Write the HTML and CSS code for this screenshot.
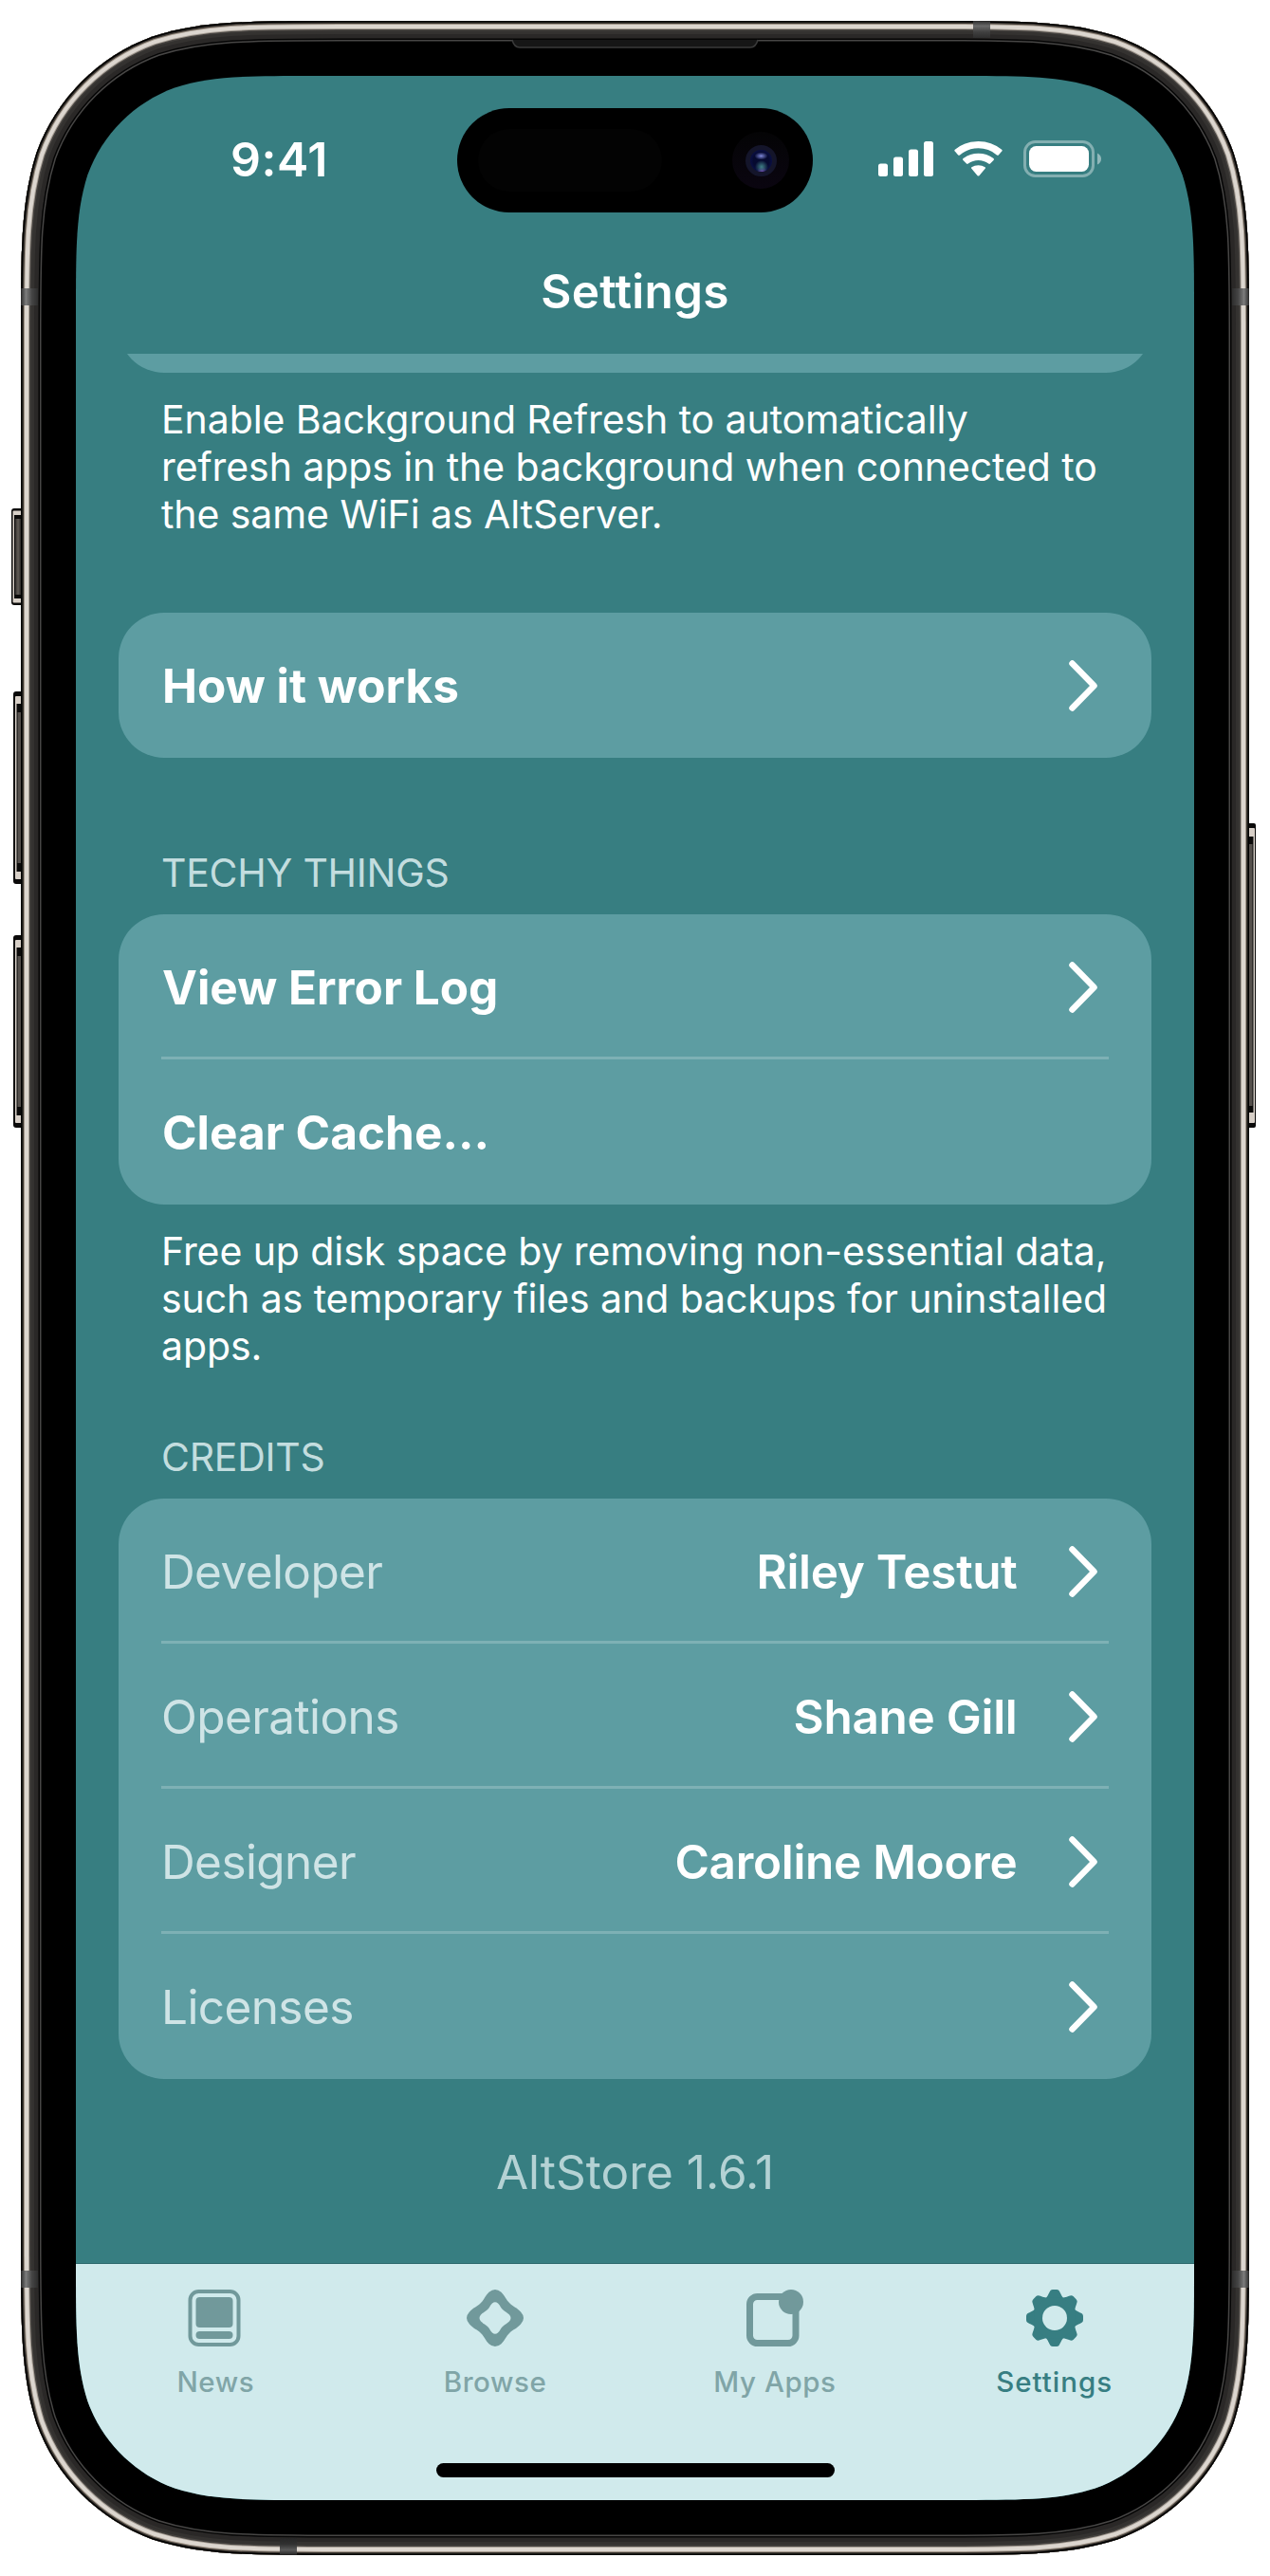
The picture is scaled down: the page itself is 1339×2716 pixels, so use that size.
FILE: index.html
```html
<!DOCTYPE html>
<html lang="en">
<head>
<meta charset="utf-8">
<title>Settings</title>
<link rel="stylesheet" href="styles.css">
</head>
<body>
<main class="device">
  <svg class="frame" viewBox="0 0 1339 2716" aria-hidden="true">
    <defs>
      <path id="body" d="M358.300 22H980.700C1077.500 22 1126 22 1178.100 38.500C1235 59.200 1279.800 104 1300.500 160.900C1317 213 1317 261.500 1317 358.300V2357.700C1317 2454.500 1317 2503 1300.500 2555.100C1279.800 2612 1235 2656.800 1178.100 2677.500C1126 2694 1077.500 2694 980.700 2694H358.300C261.500 2694 213 2694 160.900 2677.500C104 2656.800 59.200 2612 38.500 2555.100C22 2503 22 2454.500 22 2357.700V358.300C22 261.500 22 213 38.500 160.900C59.200 104 104 59.200 160.900 38.500C213 22 261.500 22 358.300 22Z"/>
      <clipPath id="bodyClip"><use href="#body"/></clipPath>
      <linearGradient id="key" x1="0" x2="1" y1="0" y2="0"><stop offset="0" stop-color="#2e2b29"/><stop offset=".5" stop-color="#625d58"/><stop offset="1" stop-color="#2e2b29"/></linearGradient>
      <linearGradient id="bandL" x1="0" x2="1" y1="0" y2="0"><stop offset="0" stop-color="#2a2a2a"/><stop offset=".3" stop-color="#7c7c7c"/><stop offset=".65" stop-color="#444"/><stop offset="1" stop-color="#2e2e2e"/></linearGradient>
      <linearGradient id="bandR" x1="1" x2="0" y1="0" y2="0"><stop offset="0" stop-color="#2a2a2a"/><stop offset=".3" stop-color="#7c7c7c"/><stop offset=".65" stop-color="#444"/><stop offset="1" stop-color="#2e2e2e"/></linearGradient>
      <linearGradient id="bandT" x1="0" x2="0" y1="0" y2="1"><stop offset="0" stop-color="#2a2a2a"/><stop offset=".3" stop-color="#6a6a6a"/><stop offset=".65" stop-color="#404040"/><stop offset="1" stop-color="#2e2e2e"/></linearGradient>
      <linearGradient id="bandB" x1="0" x2="0" y1="1" y2="0"><stop offset="0" stop-color="#222"/><stop offset=".3" stop-color="#5a5a5a"/><stop offset=".65" stop-color="#303030"/><stop offset="1" stop-color="#262626"/></linearGradient>
    </defs>
    <!-- side keys -->
    <g>
      <rect x="12" y="536" width="16" height="102" rx="3" fill="#0b0a0a"/>
      <rect x="13.500" y="538.500" width="12" height="97" rx="1" fill="#d8d0c8"/>
      <rect x="15" y="543" width="11" height="88" fill="#0b0a0a"/>
      <rect x="16" y="547" width="6" height="80" fill="url(#key)"/>
    </g>
    <g>
      <rect x="14" y="729" width="14" height="203" rx="3" fill="#0b0a0a"/>
      <rect x="16" y="734" width="8" height="193" rx="1" fill="#d8d0c8"/>
      <rect x="17.500" y="742" width="9" height="177" fill="#0b0a0a"/>
      <rect x="18.500" y="751" width="4" height="159" fill="#55504c"/>
    </g>
    <g>
      <rect x="14" y="986" width="14" height="203" rx="3" fill="#0b0a0a"/>
      <rect x="16" y="991" width="8" height="193" rx="1" fill="#d8d0c8"/>
      <rect x="17.500" y="999" width="9" height="177" fill="#0b0a0a"/>
      <rect x="18.500" y="1008" width="4" height="159" fill="#55504c"/>
    </g>
    <g>
      <rect x="1310" y="868" width="14" height="321" rx="2" fill="#0b0a0a"/>
      <rect x="1315" y="873" width="8" height="311" rx="1" fill="#d8d0c8"/>
      <rect x="1313" y="882" width="8.500" height="291" fill="#0b0a0a"/>
      <rect x="1317" y="890" width="3.500" height="276" fill="#55504c"/>
    </g>
    <!-- metal rim, drawn as nested rings -->
    <g clip-path="url(#bodyClip)">
      <use href="#body" fill="#000"/>
      <g fill="none">
        <use href="#body" stroke="#474645" stroke-width="43"/>
        <use href="#body" stroke="#050505" stroke-width="40"/>
        <use href="#body" stroke="#2a2827" stroke-width="37"/>
        <use href="#body" stroke="#343230" stroke-width="28"/>
        <use href="#body" stroke="#45423f" stroke-width="21"/>
        <use href="#body" stroke="#a59d94" stroke-width="18"/>
        <use href="#body" stroke="#dcd6cf" stroke-width="16"/>
        <use href="#body" stroke="#a1968a" stroke-width="8"/>
        <use href="#body" stroke="#3b3631" stroke-width="6"/>
        <use href="#body" stroke="#000" stroke-width="3"/>
      </g>
      <rect x="22" y="304" width="18" height="18" fill="url(#bandL)"/>
      <rect x="22" y="2394" width="18" height="18" fill="url(#bandL)"/>
      <rect x="1299" y="304" width="18" height="18" fill="url(#bandR)"/>
      <rect x="1299" y="2394" width="18" height="18" fill="url(#bandR)"/>
      <rect x="1026" y="22" width="18" height="18" fill="url(#bandT)"/>
      <rect x="295" y="2676" width="18" height="18" fill="url(#bandB)"/>
    </g>
    <path d="M540 42Q542 50 548 50H791Q797 50 799 42" fill="#161616" stroke="#3a3a3a" stroke-width="1.500"/>
  </svg>

  <div class="screen">
    <header class="top">
      <div class="status">
        <time class="clock">9:41</time>
        <svg class="indicators" viewBox="0 0 236 40" width="236" height="40" fill="#fff" aria-hidden="true">
          <rect x="0" y="24.500" width="10" height="13.500" rx="2.500"/>
          <rect x="16" y="17.500" width="10" height="20.500" rx="2.500"/>
          <rect x="32" y="9.500" width="10" height="28.500" rx="2.500"/>
          <rect x="48" y="1" width="10" height="37" rx="2.500"/>
          <path d="M80.800 11.600Q79.800 10.700 80.800 9.700Q91.500 .900 105.500 .900T130.200 9.700Q131.200 10.700 130.200 11.600L126.800 15.400Q126 16.200 125 15.400Q116.500 8.300 105.500 8.300T86 15.400Q85 16.200 84.200 15.400Z"/>
          <path d="M89.500 21Q88.600 20 89.500 19.100Q96.500 13.700 105.500 13.700T121.500 19.100Q122.400 20 121.500 21L118 24.600Q117.200 25.400 116.200 24.600Q111.500 21 105.500 21T94.800 24.600Q93.800 25.400 93 24.600Z"/>
          <path d="M98.300 29.700Q97.500 28.900 98.400 28.200Q101.500 26.200 105.500 26.200T112.600 28.200Q113.500 28.900 112.700 29.700L106.400 37.200Q105.500 38 104.600 37.200Z"/>
          <rect x="154.500" y="1.500" width="72" height="36" rx="11" fill="none" stroke="#fff" stroke-opacity=".38" stroke-width="3"/>
          <rect x="159" y="6" width="63" height="27" rx="7.500"/>
          <path d="M231 13.500Q235 15.500 235 19.500T231 25.500Z" fill-opacity=".45"/>
        </svg>
      </div>
      <h1 class="title">Settings</h1>
    </header>

    <div class="island">
      <span class="sensor"></span>
      <span class="camera"><i class="lens"></i></span>
    </div>

    <div class="content">
      <section class="card card-cut"></section>
      <p class="note">Enable Background Refresh to automatically<br>refresh apps in the background when connected to<br>the same WiFi as AltServer.</p>

      <section class="card help">
        <div class="row"><b>How it works</b><svg class="chev" viewBox="0 0 32 56"><path d="M4.500 4.500L27.500 28L4.500 51.500"/></svg></div>
      </section>

      <h2 class="heading techy">TECHY THINGS</h2>
      <section class="card">
        <div class="row"><b>View Error Log</b><svg class="chev" viewBox="0 0 32 56"><path d="M4.500 4.500L27.500 28L4.500 51.500"/></svg></div>
        <div class="row"><b>Clear Cache…</b></div>
      </section>
      <p class="note">Free up disk space by removing non-essential data,<br>such as temporary files and backups for uninstalled<br>apps.</p>

      <h2 class="heading credits">CREDITS</h2>
      <section class="card">
        <div class="row"><span>Developer</span><strong>Riley Testut</strong><svg class="chev" viewBox="0 0 32 56"><path d="M4.500 4.500L27.500 28L4.500 51.500"/></svg></div>
        <div class="row"><span>Operations</span><strong>Shane Gill</strong><svg class="chev" viewBox="0 0 32 56"><path d="M4.500 4.500L27.500 28L4.500 51.500"/></svg></div>
        <div class="row"><span>Designer</span><strong>Caroline Moore</strong><svg class="chev" viewBox="0 0 32 56"><path d="M4.500 4.500L27.500 28L4.500 51.500"/></svg></div>
        <div class="row"><span>Licenses</span><svg class="chev" viewBox="0 0 32 56"><path d="M4.500 4.500L27.500 28L4.500 51.500"/></svg></div>
      </section>
      <p class="version">AltStore 1.6.1</p>
    </div>

    <nav class="tabs">
      <a class="tab">
        <svg viewBox="1 0 66 60"><rect x="7.500" y="2" width="51" height="56" rx="9" fill="none" stroke="currentColor" stroke-width="4"/><rect x="13.500" y="8" width="39" height="32" rx="4" fill="currentColor"/><rect x="13.500" y="44" width="39" height="8" rx="4" fill="currentColor"/></svg>
        <span>News</span>
      </a>
      <a class="tab">
        <svg viewBox="0 0 66 60"><path fill="currentColor" fill-rule="evenodd" d="M26.500 2.800Q33 -2.800 39.500 2.800C43.500 6.500 44.500 11 48.500 14.500C52 18 56 19 60 23.500Q66 30 60 36.500C56 41 52 42 48.500 45.500C44.500 49 43.500 53.500 39.500 57.200Q33 62.800 26.500 57.200C22.500 53.500 21.500 49 17.500 45.500C14 42 10 41 6 36.500Q0 30 6 23.500C10 19 14 18 17.500 14.500C21.500 11 22.500 6.500 26.500 2.800ZM30 14.500C27.500 17 27 19.500 24.500 21.500C22.500 23.500 20.500 24 18 26.500Q15 30 18 33.500C20.500 36 22.500 36.500 24.500 38.500C27 40.500 27.500 43 30 45.500Q33 48 36 45.500C38.500 43 39 40.500 41.500 38.500C43.500 36.500 45.500 36 48 33.500Q51 30 48 26.500C45.500 24 43.500 23.500 41.500 21.500C39 19.500 38.500 17 36 14.500Q33 12 30 14.500Z"/></svg>
        <span>Browse</span>
      </a>
      <a class="tab">
        <svg viewBox="0 0 66 60"><rect x="6.500" y="7.500" width="48.500" height="49" rx="8" fill="none" stroke="currentColor" stroke-width="7"/><circle cx="50" cy="13" r="13" fill="currentColor"/></svg>
        <span>My Apps</span>
      </a>
      <a class="tab active">
        <svg viewBox="-33 -30 66 60"><g fill="currentColor"><path id="tooth" d="M-11.500 -19C-7.500 -21.500 -6.500 -26 -4.500 -29Q-3.500 -30 -2 -30H2Q3.500 -30 4.500 -29C6.500 -26 7.500 -21.500 11.500 -19V-10H-11.500Z"/><use href="#tooth" transform="rotate(45)"/><use href="#tooth" transform="rotate(90)"/><use href="#tooth" transform="rotate(135)"/><use href="#tooth" transform="rotate(180)"/><use href="#tooth" transform="rotate(225)"/><use href="#tooth" transform="rotate(270)"/><use href="#tooth" transform="rotate(315)"/></g><circle r="17.500" fill="none" stroke="currentColor" stroke-width="9"/><circle class="hub" r="13"/></svg>
        <span>Settings</span>
      </a>
      <i class="home"></i>
    </nav>
  </div>
</main>
</body>
</html>
```
FILE: styles.css
```css
* { box-sizing: border-box; }
body { margin: 0; background: #fff; font-family: Inter, "Liberation Sans", sans-serif; color: #fff; }
h1, h2, p { margin: 0; font-weight: 400; }

.device { position: relative; width: 1339px; height: 2716px; padding: 80px; }
.frame { position: absolute; inset: 0; }

.screen {
  position: relative;
  display: flex;
  flex-direction: column;
  width: 1179px;
  height: 2556px;
  background: #377e81;
  clip-path: path("M252.200 0H926.800C999.400 0 1035.700 0 1074.800 12.400C1117.500 27.900 1151.100 61.500 1166.600 104.200C1179 143.300 1179 179.600 1179 252.200V2303.800C1179 2376.400 1179 2412.700 1166.600 2451.800C1151.100 2494.500 1117.500 2528.100 1074.800 2543.600C1035.700 2556 999.400 2556 926.800 2556H252.200C179.600 2556 143.300 2556 104.200 2543.600C61.500 2528.100 27.900 2494.500 12.400 2451.800C0 2412.700 0 2376.400 0 2303.800V252.200C0 179.600 0 143.300 12.400 104.200C27.900 61.500 61.500 27.900 104.200 12.400C143.300 0 179.600 0 252.200 0Z");
}

.top { height: 293px; }
.status { display: flex; justify-content: space-between; padding: 58px 97px 0 163px; height: 178px; }
.clock { font-size: 50px; font-weight: 600; line-height: 60px; letter-spacing: .5px; }
.indicators { margin-top: 10px; }
.title { text-align: center; font-size: 49.500px; font-weight: 600; line-height: 60px; margin-top: 19px; letter-spacing: .25px; }

.island { position: absolute; left: 402px; top: 34px; width: 375px; height: 110px; border-radius: 55px; background: #000; }
.sensor { position: absolute; left: 22px; top: 22px; width: 194px; height: 66px; border-radius: 33px; background: #030303; }
.camera { position: absolute; left: 290px; top: 25px; width: 60px; height: 60px; border-radius: 50%; background: linear-gradient(#040405, #0a0510); display: grid; place-items: center; }
.lens {
  width: 33px; height: 33px; border-radius: 50%; border: 5px solid #14152a;
  background:
    radial-gradient(ellipse 7px 4px at 50% 28%, #7d86d8, transparent),
    radial-gradient(circle 7px at 52% 78%, #3f7f86, transparent),
    radial-gradient(circle 5px at 54% 98%, #7a2bb0, transparent),
    radial-gradient(circle, #060a30 50%, #10155e);
}

.content { flex: 1; overflow: hidden; padding: 0 45px; }
.card { background: #5d9da2; border-radius: 48px; padding: 0 45px; }
.card-cut { height: 153px; margin-top: -133px; }
.note { font-size: 41px; line-height: 50px; padding: 24px 0 0 45px; letter-spacing: -.08px; }
.help { margin-top: 79px; }
.heading { font-size: 41px; line-height: 50px; padding-left: 45px; color: #c3dddf; margin-bottom: 19px; letter-spacing: -.25px; }
.techy { margin-top: 96px; }
.credits { margin-top: 67px; }

.row { display: flex; align-items: center; height: 153px; border: solid transparent; border-width: 3px 0; font-size: 49.500px; }
.row:not(:last-child) { border-bottom-color: #7eb1b5; }
.row b { font-weight: 700; letter-spacing: 0; padding-left: 1px; }
.row span { color: #cfe4e6; letter-spacing: -.6px; }
.row strong { font-weight: 600; letter-spacing: -.3px; margin-left: auto; margin-right: 53.500px; }
.row > :nth-last-child(2):not(strong) { margin-right: auto; }
.chev { width: 32px; height: 56px; margin-right: 11px; fill: none; stroke: #fff; stroke-width: 6.500; stroke-linecap: round; stroke-linejoin: round; }
.version { text-align: center; font-size: 49.500px; line-height: 60px; margin-top: 68px; color: #b4d2d4; }

.tabs { position: relative; display: grid; grid-template-columns: repeat(4, 1fr); height: 250px; background: #d0eaec; border-top: 1px solid #2c686c; }
.tab { display: flex; flex-direction: column; align-items: center; padding-top: 27px; color: #71999b; }
.tab svg { width: 66px; height: 60px; }
.tab span { font-size: 29.500px; font-weight: 500; line-height: 36px; margin-top: 19px; letter-spacing: .6px; color: #80a5a7; }
.tab.active, .tab.active span { color: #377e82; }
.tab.active span { letter-spacing: 1px; }
.hub { fill: #d0eaec; }
.home { position: absolute; left: 380px; top: 210px; width: 420px; height: 15px; border-radius: 8px; background: #000; }
```
